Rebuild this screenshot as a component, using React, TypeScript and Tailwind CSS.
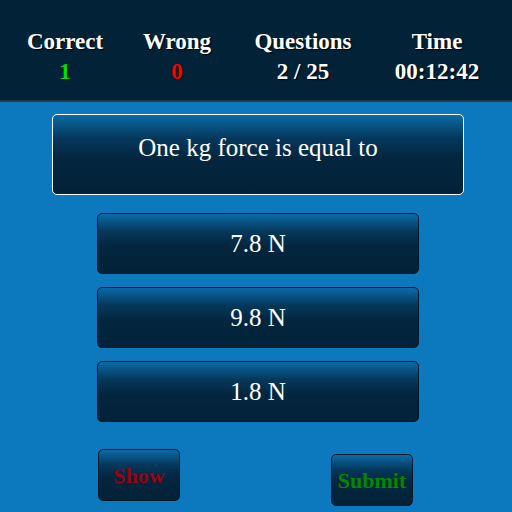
const stats = [
  { label: "Correct", value: "1", color: "text-[#00e000]" },
  { label: "Wrong", value: "0", color: "text-[#ff0000]" },
  { label: "Questions", value: "2 / 25", color: "text-white" },
  { label: "Time", value: "00:12:42", color: "text-white" },
];

const options = ["7.8 N", "9.8 N", "1.8 N"];

// shared glossy panel look for question box and all buttons
const glossy =
  "bg-[linear-gradient(to_bottom,#0b6ba5_0%,#05375a_30%,#03263e_55%,#022238_100%)]";

export default function App() {
  return (
    <div className="w-[512px] h-[512px] bg-[#0c78bd] overflow-hidden flex flex-col font-['Liberation_Serif','Times_New_Roman',serif]">
      {/* Score bar */}
      <div className="h-[102px] shrink-0 bg-[#022238] border-b-2 border-[#2a3a48] grid grid-cols-[130px_94px_158px_110px] items-center pt-[14px]">
        {stats.map((s) => (
          <div
            key={s.label}
            className="flex flex-col items-center font-bold text-[23px] leading-[30px] [text-shadow:1px_1px_1px_#000]"
          >
            <span className="text-white">{s.label}</span>
            <span className={s.color}>{s.value}</span>
          </div>
        ))}
      </div>

      {/* Question */}
      <div className="pl-[52px] pr-[48px] pt-[12px]">
        <div className={`h-[81px] rounded-[5px] border border-white ${glossy} flex justify-center pt-[18px] text-[25px] leading-[30px] text-white`}>
          One kg force is equal to
        </div>
      </div>

      {/* Options */}
      <div className="flex flex-col gap-[13px] pl-[97px] pr-[93px] pt-[18px]">
        {options.map((o) => (
          <button
            key={o}
            className={`h-[61px] rounded-[5px] border border-[#01182a] ${glossy} text-white text-[25px] leading-none flex items-center justify-center`}
          >
            {o}
          </button>
        ))}
      </div>

      {/* Actions */}
      <div className="flex items-start justify-between pl-[98px] pr-[99px] pt-[27px]">
        <button
          className={`w-[82px] h-[52px] rounded-[5px] border border-[#01182a] ${glossy} text-[#9a0010] font-bold text-[22px] flex items-center justify-center`}
        >
          Show
        </button>
        <button
          className={`w-[82px] h-[52px] mt-[5px] rounded-[5px] border border-[#01182a] ${glossy} text-[#008a00] font-bold text-[22px] flex items-center justify-center`}
        >
          Submit
        </button>
      </div>
    </div>
  );
}
